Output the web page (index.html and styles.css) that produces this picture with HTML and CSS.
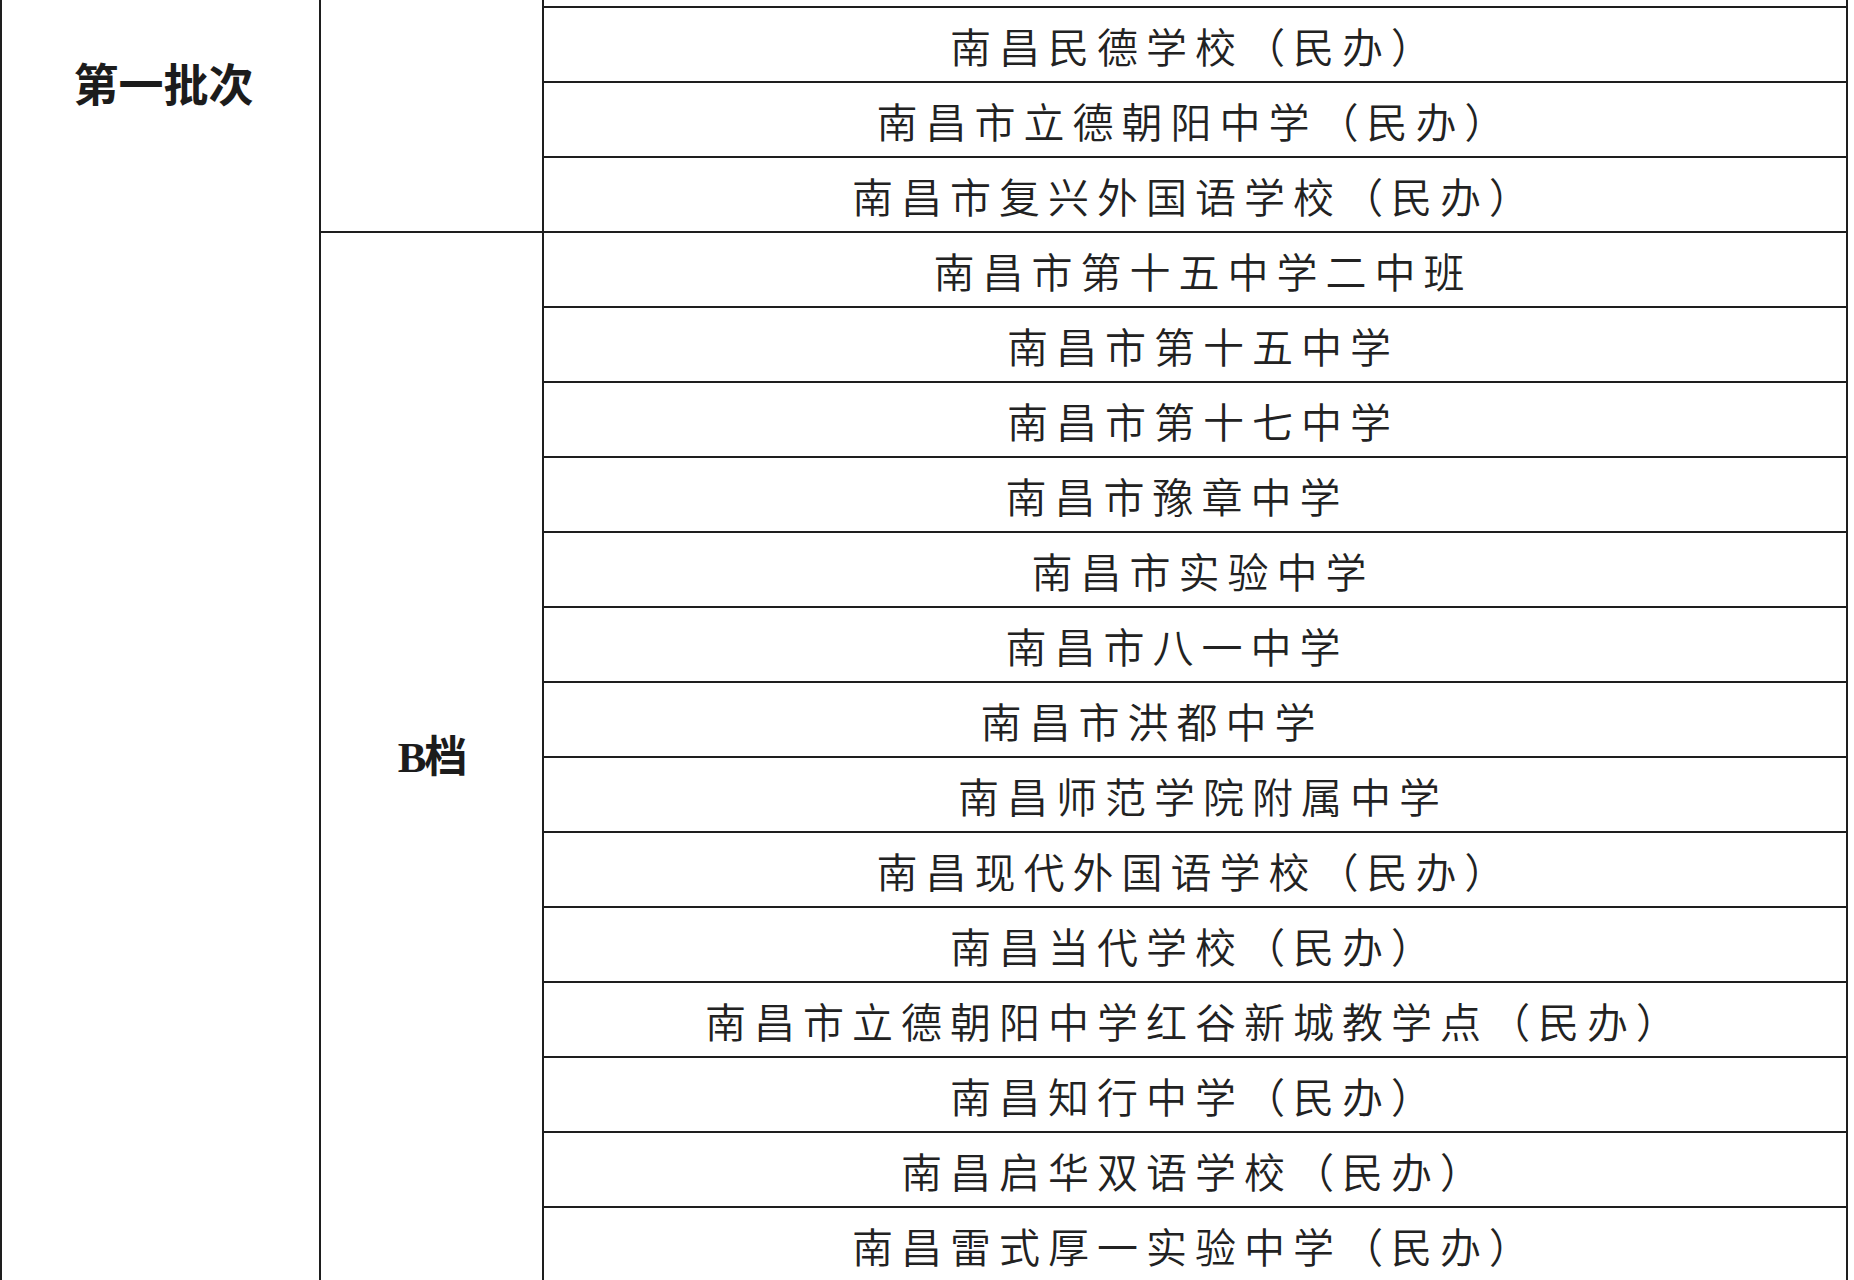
FILE: index.html
```html
<!DOCTYPE html>
<html lang="zh-CN">
<head>
<meta charset="utf-8">
<title>第一批次</title>
<link rel="stylesheet" href="styles.css">
</head>
<body>
<div class="sheet">
  <div class="col-batch">
    <div class="batch-label">第一批次</div>
  </div>
  <div class="col-tier">
    <div class="tier tier-a"></div>
    <div class="tier tier-b"><span class="tier-label">B档</span></div>
  </div>
  <div class="col-schools">
    <div class="stub"></div>
    <div class="row">南昌民德学校（民办）</div>
    <div class="row">南昌市立德朝阳中学（民办）</div>
    <div class="row">南昌市复兴外国语学校（民办）</div>
    <div class="row shift-r">南昌市第十五中学二中班</div>
    <div class="row shift-r">南昌市第十五中学</div>
    <div class="row shift-r">南昌市第十七中学</div>
    <div class="row shift-l1">南昌市豫章中学</div>
    <div class="row shift-r">南昌市实验中学</div>
    <div class="row shift-l1">南昌市八一中学</div>
    <div class="row shift-l2">南昌市洪都中学</div>
    <div class="row shift-r">南昌师范学院附属中学</div>
    <div class="row">南昌现代外国语学校（民办）</div>
    <div class="row">南昌当代学校（民办）</div>
    <div class="row">南昌市立德朝阳中学红谷新城教学点（民办）</div>
    <div class="row">南昌知行中学（民办）</div>
    <div class="row">南昌启华双语学校（民办）</div>
    <div class="row">南昌雷式厚一实验中学（民办）</div>
  </div>
</div>
</body>
</html>
```
FILE: styles.css
```css
html, body {
  margin: 0;
  padding: 0;
  background: #ffffff;
}

body {
  width: 1854px;
  height: 1280px;
  overflow: hidden;
  color: #1c1c1c;
  font-family: "Noto Sans CJK SC", "Liberation Sans", sans-serif;
}

.sheet {
  display: flex;
  width: 1848px;
  border-left: 2px solid #1e1e1e;
  border-right: 2px solid #1e1e1e;
  box-sizing: border-box;
}

.col-batch {
  width: 317px;
  flex: none;
  border-right: 2px solid #1e1e1e;
  display: flex;
  justify-content: center;
}

.batch-label {
  padding-top: 60px;
  font-size: 45px;
  line-height: 45px;
  font-weight: 700;
  height: 45px;
  padding-left: 6px;
}

.col-tier {
  width: 221px;
  flex: none;
  border-right: 2px solid #1e1e1e;
}

.tier-a {
  height: 231px;
  border-bottom: 2px solid #1e1e1e;
}

.tier-b {
  height: 1049px;
  display: flex;
  align-items: center;
  justify-content: center;
}

.tier-label {
  font-family: "Liberation Serif", "Noto Sans CJK SC", serif;
  font-weight: 700;
  font-size: 43px;
  line-height: 50px;
  letter-spacing: -2px;
}

.col-schools {
  flex: 1;
  display: flex;
  flex-direction: column;
}

.stub {
  height: 6px;
  border-bottom: 2px solid #1e1e1e;
}

.row {
  height: 73px;
  flex: none;
  border-bottom: 2px solid #1e1e1e;
  display: flex;
  align-items: center;
  justify-content: center;
  font-size: 41px;
  font-weight: 350;
  letter-spacing: 8px;
  white-space: nowrap;
  color: #222;
}

.shift-r {
  padding-left: 16px;
}

.shift-l1 {
  padding-right: 36px;
}

.shift-l2 {
  padding-right: 86px;
}
```
